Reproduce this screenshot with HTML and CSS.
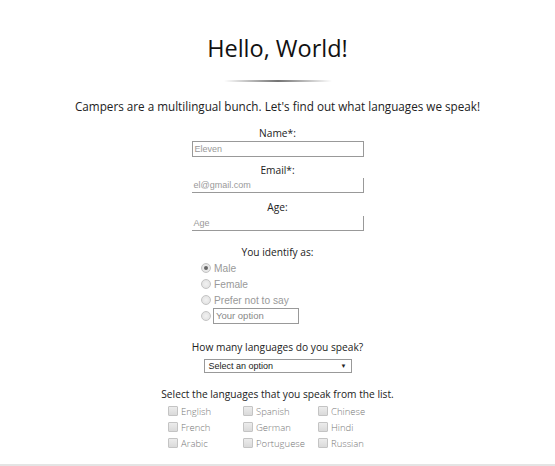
FILE: index.html
```html
<!DOCTYPE html>
<html>
<head>
<meta charset="utf-8">
<link rel="stylesheet" href="styles.css">
</head>
<body>
<main class="page">
  <h1 class="title">Hello, World!</h1>
  <div class="rule"></div>
  <p class="intro">Campers are a multilingual bunch. Let's find out what languages we speak!</p>
  <form class="form">
    <label class="label label-first">Name*:</label>
    <div class="field field-full">Eleven</div>
    <label class="label">Email*:</label>
    <div class="field">el@gmail.com</div>
    <label class="label label-age">Age:</label>
    <div class="field field-age">Age</div>

    <div class="label label-gap">You identify as:</div>
    <div class="radios">
      <div class="radio-row"><span class="radio checked"></span><span class="rtext">Male</span></div>
      <div class="radio-row"><span class="radio"></span><span class="rtext">Female</span></div>
      <div class="radio-row"><span class="radio"></span><span class="rtext">Prefer not to say</span></div>
      <div class="radio-row"><span class="radio radio-top"></span><span class="other">Your option</span></div>
    </div>

    <div class="label label-gap2">How many languages do you speak?</div>
    <div class="select"><span>Select an option</span><span class="arrow">▼</span></div>

    <div class="label label-gap3">Select the languages that you speak from the list.</div>
    <div class="checks">
      <div class="check"><span class="box"></span>English</div>
      <div class="check"><span class="box"></span>Spanish</div>
      <div class="check"><span class="box"></span>Chinese</div>
      <div class="check"><span class="box"></span>French</div>
      <div class="check"><span class="box"></span>German</div>
      <div class="check"><span class="box"></span>Hindi</div>
      <div class="check"><span class="box"></span>Arabic</div>
      <div class="check"><span class="box"></span>Portuguese</div>
      <div class="check"><span class="box"></span>Russian</div>
    </div>
  </form>
  <div class="bottom"></div>
</main>
</body>
</html>
```
FILE: styles.css
```css
html, body {
  margin: 0;
  padding: 0;
  background: #fff;
}
body {
  font-family: "Open Sans", sans-serif;
  color: #222;
}
.page {
  width: 555px;
  height: 466px;
  display: flex;
  flex-direction: column;
  align-items: center;
  position: relative;
}
.title {
  margin: 31px 0 0;
  font-size: 23.5px;
  font-weight: 400;
  line-height: 34px;
  color: #111;
}
.rule {
  margin-top: 15px;
  width: 108px;
  height: 2px;
  background: linear-gradient(to right, rgba(0,0,0,0), rgba(0,0,0,0.55) 50%, rgba(0,0,0,0));
}
.intro {
  margin: 15px 0 0;
  font-size: 11.7px;
  line-height: 18px;
  color: #222;
}
.form {
  align-self: stretch;
  display: flex;
  flex-direction: column;
  align-items: center;
}
.label {
  font-size: 10.2px;
  line-height: 14px;
  color: #222;
  margin-top: 6px;
}
.label-first { margin-top: 11px; }
.label-age { margin-top: 7px; }
.field {
  flex: none;
  box-sizing: border-box;
  width: 172px;
  height: 15px;
  margin-top: 1px;
  border-right: 1px solid #999;
  border-bottom: 1px solid #999;
  font-family: "Liberation Sans", Arial, sans-serif;
  font-size: 9px;
  line-height: 14px;
  color: #999;
  padding-left: 2px;
}
.field-full {
  border: 1px solid #999;
  height: 16px;
  line-height: 14px;
}
.field-age { margin-top: 2px; }
.label-gap { margin-top: 14px; }
.radios {
  display: flex;
  flex-direction: column;
  align-self: flex-start;
  margin-left: 201px;
  margin-top: 1px;
}
.radio-row {
  display: flex;
  align-items: center;
  height: 16px;
  font-family: "Liberation Sans", Arial, sans-serif;
  font-size: 10.2px;
  color: #999;
}
.radio {
  flex: none;
  width: 8px;
  height: 8px;
  border-radius: 50%;
  border: 1px solid #c4c4c4;
  background: radial-gradient(circle, #f2f2f2 0, #dedede 100%);
  margin-right: 3px;
  position: relative;
}
.radio-top {
  align-self: flex-start;
  margin-top: 3px;
}
.radio.checked::after {
  content: "";
  position: absolute;
  left: 2px;
  top: 2px;
  width: 4px;
  height: 4px;
  border-radius: 50%;
  background: #666;
}
.other {
  box-sizing: border-box;
  border: 1px solid #999;
  width: 86px;
  height: 16px;
  line-height: 14px;
  padding-left: 2px;
  font-size: 9.5px;
  color: #888;
  margin-left: -1px;
}
.label-gap2 { margin-top: 16px; }
.select {
  flex: none;
  box-sizing: border-box;
  width: 148px;
  height: 14px;
  margin-top: 5px;
  border: 1px solid #999;
  display: flex;
  justify-content: space-between;
  align-items: center;
  font-family: "Liberation Sans", Arial, sans-serif;
  font-size: 9px;
  color: #222;
  padding: 0 4px;
}
.arrow {
  font-size: 6px;
}
.label-gap3 { margin-top: 14px; }
.checks {
  display: grid;
  grid-template-columns: 75px 75px 75px;
  margin-top: 2px;
  margin-left: 6px;
}
.check {
  display: flex;
  align-items: center;
  height: 16px;
  font-size: 9.5px;
  font-weight: 300;
  color: #777;
}
.box {
  flex: none;
  width: 8px;
  height: 8px;
  border: 1px solid #c4c4c4;
  background: linear-gradient(#ececec, #dadada);
  margin-right: 3px;
  border-radius: 1px;
}
.bottom {
  position: absolute;
  left: 0;
  right: 0;
  bottom: 0;
  height: 2px;
  background: #e4e4e4;
}
```
